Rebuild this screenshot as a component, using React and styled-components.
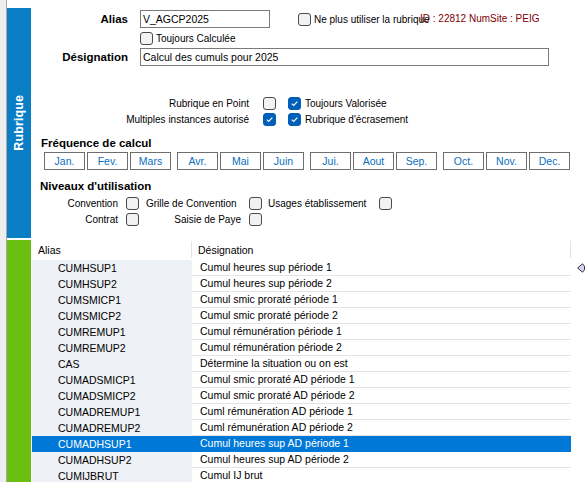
import React from "react";
import styled, { createGlobalStyle } from "styled-components";

const GlobalStyle = createGlobalStyle`
  html, body { margin: 0; padding: 0; background: #ffffff; }
  body { font-family: "Liberation Sans", Arial, sans-serif; color: #000; }
  * { box-sizing: border-box; }
`;

const Page = styled.div`
  display: flex;
  width: 585px;
  height: 482px;
  overflow: hidden;
  background: #fff;
`;

const EdgeStrip = styled.div`
  width: 7px;
  flex: none;
  background: #eeeeee;
  border-right: 1px solid #a8a8a8;
`;

const Sections = styled.div`
  flex: 1;
  display: flex;
  flex-direction: column;
  gap: 2px;
  padding-top: 8px;
`;

const Section = styled.section`
  display: flex;
  height: ${(p) => p.$height}px;
  flex: none;
`;

const SideBand = styled.div`
  width: 24px;
  flex: none;
  background: ${(p) => p.$color};
  display: flex;
  align-items: center;
  justify-content: center;
`;

const BandTitle = styled.span`
  writing-mode: vertical-rl;
  transform: rotate(180deg);
  color: #fff;
  font-weight: bold;
  font-size: 12.5px;
  letter-spacing: 0.1px;
`;

const FormArea = styled.div`
  flex: 1;
  position: relative;
  padding-top: 2px;
  font-size: 10px;
`;

const FieldRow = styled.div`
  display: grid;
  grid-template-columns: 97px 1fr;
  column-gap: 12px;
  align-items: center;
  height: ${(p) => p.$h}px;
  margin-top: ${(p) => p.$mt || 0}px;
`;

const FieldLabel = styled.label`
  text-align: right;
  font-weight: bold;
  font-size: 11.5px;
`;

const Inline = styled.div`
  display: flex;
  align-items: center;
`;

const TextInput = styled.div`
  width: ${(p) => p.$w}px;
  height: 18px;
  border: 1px solid #7a7a7a;
  background: #fff;
  font-size: 10.5px;
  line-height: 16px;
  padding-left: 2px;
  white-space: nowrap;
`;

const CheckItem = styled.span`
  display: inline-flex;
  align-items: center;
  gap: 3px;
  margin-left: ${(p) => p.$ml || 0}px;
  white-space: nowrap;
`;

const Box = styled.span`
  width: 13px;
  height: 13px;
  flex: none;
  border-radius: 3px;
  display: inline-flex;
  align-items: center;
  justify-content: center;
  border: 1px solid ${(p) => (p.$checked ? "#005fb8" : "#4a4a4a")};
  background: ${(p) => (p.$checked ? "#005fb8" : "#f2f2f2")};
`;

const IdText = styled.span`
  position: absolute;
  left: 389px;
  top: 5px;
  color: #800000;
  font-size: 10px;
  white-space: nowrap;
`;

const OptionGrid = styled.div`
  display: grid;
  grid-template-columns: 218px 27px 25px auto;
  grid-auto-rows: 13px;
  row-gap: 3px;
  align-items: center;
  margin-top: ${(p) => p.$mt}px;
`;

const OptionLabel = styled.span`
  text-align: right;
  white-space: nowrap;
`;

const BoxCell = styled.span`
  display: flex;
  justify-content: flex-end;
`;

const OptionText = styled.span`
  padding-left: 4px;
  white-space: nowrap;
`;

const SectionTitle = styled.div`
  font-weight: bold;
  font-size: 11.5px;
  line-height: 14px;
  margin-top: ${(p) => p.$mt}px;
  padding-left: ${(p) => p.$pl}px;
`;

const MonthBar = styled.div`
  display: flex;
  gap: 6px;
  margin-top: 2px;
  padding-left: 13px;
`;

const MonthGroup = styled.div`
  display: flex;
  gap: 2px;
`;

const MonthButton = styled.div`
  width: 41px;
  height: 18px;
  border: 1px solid #6e6e6e;
  color: #0a6ebd;
  font-size: 10.5px;
  display: flex;
  align-items: center;
  justify-content: center;
  background: #fff;
`;

const LevelGrid = styled.div`
  display: grid;
  grid-template-columns: 87px 13px 94px 13px 101px 13px;
  column-gap: 8px;
  grid-auto-rows: 13px;
  row-gap: 3px;
  align-items: center;
  margin-top: 4px;
`;

const LevelLabel = styled.span`
  text-align: ${(p) => (p.$left ? "left" : "right")};
  white-space: nowrap;
  margin-left: ${(p) => p.$ml || 0}px;
`;

const ListArea = styled.div`
  flex: 1;
  display: flex;
  align-items: flex-start;
  font-size: 10.5px;
`;

const Table = styled.div`
  width: 539px;
  margin-left: 1px;
  flex: none;
`;

const HeaderRow = styled.div`
  display: grid;
  grid-template-columns: 160px 379px;
  height: 20px;
  background: #fff;
`;

const HeaderCell = styled.div`
  display: flex;
  align-items: center;
  padding-left: ${(p) => p.$pl}px;
  border-right: 1px solid #e3e3e3;
  margin: 1px 0 2px;
`;

const Row = styled.div`
  display: grid;
  grid-template-columns: 160px 379px;
  height: 16px;
  background: ${(p) => (p.$selected ? "#0078d7" : "transparent")};
  color: ${(p) => (p.$selected ? "#fff" : "#000")};
`;

const AliasCell = styled.div`
  background: ${(p) => (p.$selected ? "#0078d7" : "#eef1f5")};
  padding-left: 26px;
  line-height: 16px;
  white-space: nowrap;
`;

const DesigCell = styled.div`
  padding-left: 8px;
  line-height: 15px;
  border-bottom: 1px solid ${(p) => (p.$selected ? "#0078d7" : "#e4e4e4")};
  white-space: nowrap;
`;

const ArrowMark = styled.svg`
  margin-top: 23px;
  margin-left: 6px;
  flex: none;
`;

const Check = ({ checked }) => (
  <Box $checked={checked}>
    {checked && (
      <svg width="9" height="9" viewBox="0 0 9 9">
        <path d="M1.8 4.6 L3.7 6.4 L7.3 2.6" fill="none" stroke="#fff" strokeWidth="1.1" />
      </svg>
    )}
  </Box>
);

const months = [
  ["Jan.", "Fev.", "Mars"],
  ["Avr.", "Mai", "Juin"],
  ["Jui.", "Aout", "Sep."],
  ["Oct.", "Nov.", "Dec."],
];

const rows = [
  ["CUMHSUP1", "Cumul heures sup période 1"],
  ["CUMHSUP2", "Cumul heures sup période 2"],
  ["CUMSMICP1", "Cumul smic proraté période 1"],
  ["CUMSMICP2", "Cumul smic proraté période 2"],
  ["CUMREMUP1", "Cumul rémunération période 1"],
  ["CUMREMUP2", "Cumul rémunération période 2"],
  ["CAS", "Détermine la situation ou on est"],
  ["CUMADSMICP1", "Cumul smic proraté AD période 1"],
  ["CUMADSMICP2", "Cumul smic proraté AD période 2"],
  ["CUMADREMUP1", "Cuml rémunération AD période 1"],
  ["CUMADREMUP2", "Cuml rémunération AD période 2"],
  ["CUMADHSUP1", "Cumul heures sup AD période 1"],
  ["CUMADHSUP2", "Cumul heures sup AD période 2"],
  ["CUMIJBRUT", "Cumul IJ brut"],
];

export default function App() {
  return (
    <>
      <GlobalStyle />
      <Page>
        <EdgeStrip />
        <Sections>
          <Section $height={230}>
            <SideBand $color="#0a7ec4">
              <BandTitle>Rubrique</BandTitle>
            </SideBand>
            <FormArea>
              <FieldRow $h={18}>
                <FieldLabel>Alias</FieldLabel>
                <Inline>
                  <TextInput $w={130}>V_AGCP2025</TextInput>
                  <CheckItem $ml={28}>
                    <Check />
                    Ne plus utiliser la rubrique
                  </CheckItem>
                </Inline>
              </FieldRow>
              <IdText>ID : 22812 NumSite : PEIG</IdText>
              <FieldRow $h={13} $mt={4}>
                <span />
                <Inline>
                  <CheckItem>
                    <Check />
                    Toujours Calculée
                  </CheckItem>
                </Inline>
              </FieldRow>
              <FieldRow $h={18} $mt={3}>
                <FieldLabel>Désignation</FieldLabel>
                <TextInput $w={409}>Calcul des cumuls pour 2025</TextInput>
              </FieldRow>

              <OptionGrid $mt={31}>
                <OptionLabel>Rubrique en Point</OptionLabel>
                <BoxCell><Check /></BoxCell>
                <BoxCell><Check checked /></BoxCell>
                <OptionText>Toujours Valorisée</OptionText>
                <OptionLabel>Multiples instances autorisé</OptionLabel>
                <BoxCell><Check checked /></BoxCell>
                <BoxCell><Check checked /></BoxCell>
                <OptionText>Rubrique d'écrasement</OptionText>
              </OptionGrid>

              <SectionTitle $mt={10} $pl={10}>Fréquence de calcul</SectionTitle>
              <MonthBar>
                {months.map((g, i) => (
                  <MonthGroup key={i}>
                    {g.map((m) => (
                      <MonthButton key={m}>{m}</MonthButton>
                    ))}
                  </MonthGroup>
                ))}
              </MonthBar>

              <SectionTitle $mt={9} $pl={9}>Niveaux d'utilisation</SectionTitle>
              <LevelGrid>
                <LevelLabel>Convention</LevelLabel>
                <Check />
                <LevelLabel $left $ml={-1}>Grille de Convention</LevelLabel>
                <Check />
                <LevelLabel $left $ml={-2}>Usages établissement</LevelLabel>
                <Check />
                <LevelLabel>Contrat</LevelLabel>
                <Check />
                <LevelLabel>Saisie de Paye</LevelLabel>
                <Check />
              </LevelGrid>
            </FormArea>
          </Section>

          <Section $height={250}>
            <SideBand $color="#6abf10" />
            <ListArea>
              <Table>
                <HeaderRow>
                  <HeaderCell $pl={6}>Alias</HeaderCell>
                  <HeaderCell $pl={6}>Désignation</HeaderCell>
                </HeaderRow>
                {rows.map(([a, d]) => {
                  const sel = a === "CUMADHSUP1";
                  return (
                    <Row key={a} $selected={sel}>
                      <AliasCell $selected={sel}>{a}</AliasCell>
                      <DesigCell $selected={sel}>{d}</DesigCell>
                    </Row>
                  );
                })}
              </Table>
              <ArrowMark width="8" height="10" viewBox="0 0 8 10">
                <path d="M0.6 5 L5.5 0.8 L7.5 3.2 L7.5 6.8 L5.5 9.2 Z" fill="#d9d4f0" stroke="#333" strokeWidth="1" />
              </ArrowMark>
            </ListArea>
          </Section>
        </Sections>
      </Page>
    </>
  );
}
